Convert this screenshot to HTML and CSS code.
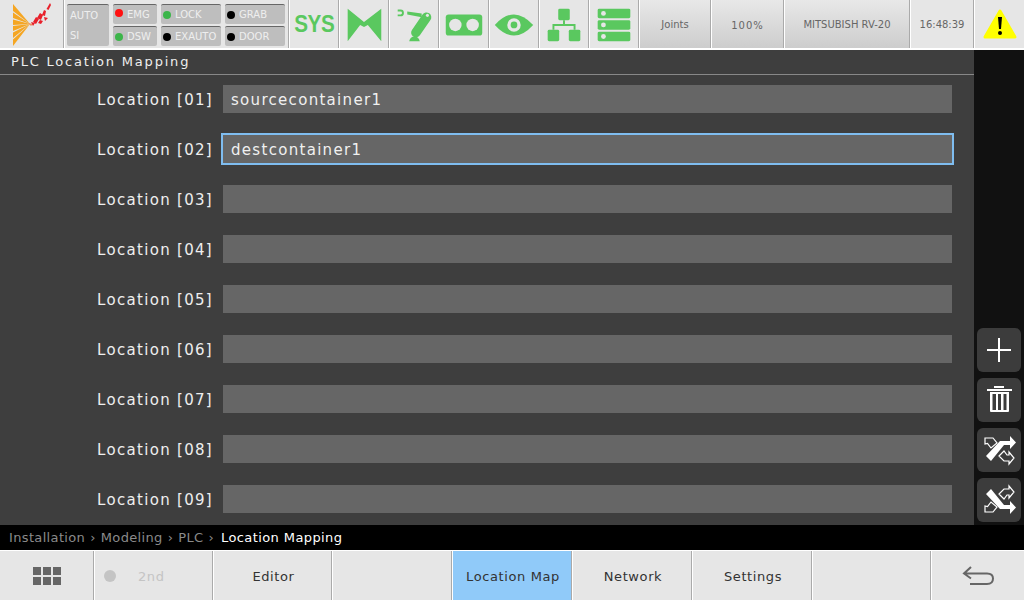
FILE: index.html
```html
<!DOCTYPE html>
<html lang="en">
<head>
<meta charset="utf-8">
<title>PLC Location Mapping</title>
<link rel="stylesheet" href="styles.css">
</head>
<body>
<div class="app">
  <header class="topbar">
    <div class="cell logo">
      <svg width="63" height="48" viewBox="0 0 63 48">
        <g fill="#f5a623">
          <polygon points="13,4 30,24 13,11"/>
          <polygon points="13,12.500 30,24 13,18"/>
          <polygon points="13,19.500 30,24 13,25"/>
          <polygon points="13,26 30,24 13,31"/>
          <polygon points="13,32.500 30,24 13,38"/>
          <polygon points="13,39.500 30,24 13,46"/>
        </g>
        <polygon points="28,23 33,24 31,26" fill="#f08a5d"/>
        <g fill="#e8202a">
          <polygon points="50,3 51,5 48.500,10 46.500,9"/>
          <polygon points="44,10 46,11 45,16 42,15"/>
          <polygon points="40,13 43,15 41,20 37,18"/>
          <polygon points="44,17 48,18 45,21"/>
          <polygon points="36,17 39,19 36,24 33,22"/>
          <polygon points="40,20 43,21 41,24 38,23"/>
          <polygon points="31,22 35,23 33,26"/>
        </g>
      </svg>
    </div>
    <div class="cell status">
      <div class="mode"><span>AUTO</span><span>SI</span></div>
      <div class="lamps lamps-a">
        <div class="lamp"><i class="dot red up"></i>EMG</div>
        <div class="lamp"><i class="dot green"></i>DSW</div>
      </div>
      <div class="lamps lamps-b">
        <div class="lamp"><i class="dot green"></i>LOCK</div>
        <div class="lamp"><i class="dot black"></i>EXAUTO</div>
      </div>
      <div class="lamps lamps-b">
        <div class="lamp"><i class="dot black"></i>GRAB</div>
        <div class="lamp"><i class="dot black"></i>DOOR</div>
      </div>
    </div>
    <div class="cell icon"><span class="sys">SYS</span></div>
    <div class="cell icon">
      <svg width="50" height="48" viewBox="0 0 50 48"><path fill="#5ac85f" d="M8 8 L25 22 L43 8 V42 L29 25 L25 27 L21 25 L8 42 Z"/></svg>
    </div>
    <div class="cell icon">
      <svg width="50" height="48" viewBox="0 0 50 48">
        <path fill="none" stroke="#5ac85f" stroke-width="2" d="M8 10 H11 A2.500 2.500 0 0 1 11 15 H8"/>
        <path fill="#5ac85f" d="M18 11 L33 13 L33 17 L18 14 Z"/>
        <path fill="none" stroke="#5ac85f" stroke-width="10" stroke-linecap="round" d="M38 17 L27 33"/>
        <circle cx="39" cy="15" r="1.600" fill="#e6e6e6"/>
        <path fill="#5ac85f" d="M20 42 Q21 37 25.500 37 Q30 37 31 42 Z"/>
      </svg>
    </div>
    <div class="cell icon">
      <svg width="50" height="48" viewBox="0 0 50 48">
        <rect x="6" y="14" width="38" height="22" rx="3" fill="#5ac85f"/>
        <circle cx="16" cy="25" r="6.500" fill="#e6e6e6"/>
        <circle cx="34" cy="25" r="6.500" fill="#e6e6e6"/>
      </svg>
    </div>
    <div class="cell icon">
      <svg width="50" height="48" viewBox="0 0 50 48">
        <path fill="#5ac85f" d="M5 25 Q15 14 25 14 Q35 14 45 25 Q35 36 25 36 Q15 36 5 25 Z"/>
        <circle cx="25" cy="25" r="7" fill="#e6e6e6"/>
        <circle cx="25" cy="25" r="3.500" fill="#5ac85f"/>
      </svg>
    </div>
    <div class="cell icon">
      <svg width="50" height="48" viewBox="0 0 50 48">
        <rect x="19" y="8" width="12" height="12" rx="1.500" fill="#5ac85f"/>
        <rect x="8" y="30" width="12" height="12" rx="1.500" fill="#5ac85f"/>
        <rect x="30" y="30" width="12" height="12" rx="1.500" fill="#5ac85f"/>
        <path fill="none" stroke="#5ac85f" stroke-width="2" d="M25 20 V25 M14 30 V25 H36 V30"/>
      </svg>
    </div>
    <div class="cell icon">
      <svg width="50" height="48" viewBox="0 0 50 48">
        <g fill="#5ac85f"><rect x="8" y="8" width="34" height="10" rx="1.500"/><rect x="8" y="20" width="34" height="10" rx="1.500"/><rect x="8" y="32" width="34" height="10" rx="1.500"/></g>
        <g fill="#e6e6e6"><circle cx="14" cy="13" r="2.500"/><circle cx="14" cy="25" r="2.500"/><circle cx="14" cy="37" r="2.500"/></g>
      </svg>
    </div>
    <div class="cell btn w71"><span>Joints</span></div>
    <div class="cell btn w72"><span class="wide">100%</span></div>
    <div class="cell btn w125"><span>MITSUBISH RV-20</span></div>
    <div class="cell clock">16:48:39</div>
    <div class="warn">
      <svg width="36" height="32" viewBox="0 0 36 32">
        <path fill="#ffff00" stroke="#ffff00" stroke-width="3" stroke-linejoin="round" d="M18 3 L33 29 H3 Z"/>
        <path fill="#000" d="M16 9 H20 L19 21 H17 Z"/>
        <circle cx="18" cy="25" r="2" fill="#000"/>
      </svg>
    </div>
  </header>

  <div class="middle">
    <main class="panel">
      <h1 class="title">PLC Location Mapping</h1>
      <div class="rows">
        <div class="row"><label>Location [01]</label><div class="field">sourcecontainer1</div></div>
        <div class="row"><label>Location [02]</label><div class="field focus">destcontainer1</div></div>
        <div class="row"><label>Location [03]</label><div class="field"></div></div>
        <div class="row"><label>Location [04]</label><div class="field"></div></div>
        <div class="row"><label>Location [05]</label><div class="field"></div></div>
        <div class="row"><label>Location [06]</label><div class="field"></div></div>
        <div class="row"><label>Location [07]</label><div class="field"></div></div>
        <div class="row"><label>Location [08]</label><div class="field"></div></div>
        <div class="row"><label>Location [09]</label><div class="field"></div></div>
      </div>
    </main>
    <aside class="side">
      <button class="tool">
        <svg width="44" height="44" viewBox="0 0 44 44"><path stroke="#fff" stroke-width="2" d="M10 22 H34 M22 10 V34"/></svg>
      </button>
      <button class="tool">
        <svg width="44" height="44" viewBox="0 0 44 44">
          <path fill="#fff" d="M17 8 H27 V10 H17 Z M10 11 H35 V13 H10 Z"/>
          <path fill="#fff" fill-rule="evenodd" d="M13 14 H32 V33 Q32 34 31 34 H14 Q13 34 13 33 Z M15.500 16 V32 H19 V16 Z M21 16 V32 H24 V16 Z M26.500 16 V32 H29.500 V16 Z"/>
        </svg>
      </button>
      <button class="tool">
        <svg width="44" height="44" viewBox="0 0 44 44">
          <path fill="#fff" d="M9 28 L23 13 H33 V8 L39 14.500 L33 21 V17 H27 L14 33 Z"/>
          <path fill="none" stroke="#fff" stroke-width="1.200" d="M8 10 H16 L20 15 L14 20 L10.500 15.500 L8 16 Z"/>
          <path fill="none" stroke="#fff" stroke-width="1.200" d="M22 28 L27 23 L30 27 H32 V24 L37 30 L32 36 V33 H27 Z"/>
        </svg>
      </button>
      <button class="tool">
        <svg width="44" height="44" viewBox="0 0 44 44">
          <g transform="matrix(1 0 0 -1 0 44)">
            <path fill="#fff" d="M9 28 L23 13 H33 V8 L39 14.500 L33 21 V17 H27 L14 33 Z"/>
            <path fill="none" stroke="#fff" stroke-width="1.200" d="M8 10 H16 L20 15 L14 20 L10.500 15.500 L8 16 Z"/>
            <path fill="none" stroke="#fff" stroke-width="1.200" d="M22 28 L27 23 L30 27 H32 V24 L37 30 L32 36 V33 H27 Z"/>
          </g>
        </svg>
      </button>
    </aside>
  </div>

  <nav class="crumbs">
    <span>Installation</span><b>›</b><span>Modeling</span><b>›</b><span>PLC</span><b>›</b><span class="here">Location Mapping</span>
  </nav>

  <footer class="bottombar">
    <div class="tab t93">
      <svg width="28" height="18" viewBox="0 0 28 18"><g fill="#666"><rect x="0" y="0" width="8" height="8"/><rect x="10" y="0" width="8" height="8"/><rect x="20" y="0" width="8" height="8"/><rect x="0" y="10" width="8" height="8"/><rect x="10" y="10" width="8" height="8"/><rect x="20" y="10" width="8" height="8"/></g></svg>
    </div>
    <div class="tab t119 second"><i class="led"></i><span>2nd</span></div>
    <div class="tab t119 text">Editor</div>
    <div class="tab t120"></div>
    <div class="tab t121 active text">Location Map</div>
    <div class="tab t120 text">Network</div>
    <div class="tab t120 text">Settings</div>
    <div class="tab t119"></div>
    <div class="tab grow">
      <svg width="34" height="24" viewBox="0 0 34 24"><path fill="none" stroke="#666" stroke-width="2" stroke-linejoin="miter" d="M10 3 L3 9.500 L10 14.500 M3 9.500 H26 Q32 9.500 32 14.500 Q32 20 26 20 H9"/></svg>
    </div>
  </footer>
</div>
</body>
</html>
```
FILE: styles.css
```css
* { box-sizing: border-box; }
html, body { margin: 0; height: 100%; overflow: hidden; }
body { font-family: "DejaVu Sans", sans-serif; background: #000; }
.app { width: 1024px; height: 600px; display: flex; flex-direction: column; }

.topbar { height: 50px; display: flex; background: #e6e6e6; border-bottom: 2px solid #fff; flex: none; }
.cell { flex: none; display: flex; align-items: center; justify-content: center; border-right: 1px solid #aaa; box-shadow: 1px 0 0 #fff; margin-right: 1px; }
.logo { width: 64px; }
.status { width: 224px; gap: 4px; padding: 4px 3px 2px 2px; align-items: stretch; justify-content: flex-start; }
.mode { width: 42px; height: 42px; background: #bebebe; border-top: 1px solid #666; border-radius: 2px; color: #eee; font-size: 10px; display: flex; flex-direction: column; justify-content: space-around; padding-left: 3px; }
.lamps { display: flex; flex-direction: column; gap: 2px; height: 42px; }
.lamps-a { width: 44px; }
.lamps-b { width: 60px; }
.lamp { height: 20px; background: #bebebe; border-top: 1px solid #666; border-radius: 2px; color: #eee; font-size: 10px; display: flex; align-items: center; padding-left: 2px; gap: 4px; white-space: nowrap; }
.dot { width: 8px; height: 8px; border-radius: 50%; flex: none; }
.up { margin-top: -3px; }
.red { background: #ff1010; }
.green { background: #3cb54a; }
.black { background: #000; }

.icon { width: 49px; }
.sys { font-family: "Liberation Sans", sans-serif; color: #5ac85f; font-weight: 700; font-size: 24px; transform: scaleX(.86); letter-spacing: -.5px; }

.btn { background: linear-gradient(#e8e8e8, #cdcdcd); color: #666; font-size: 10px; white-space: nowrap; }
.btn span { padding-top: 1px; }
.btn .wide { letter-spacing: 1px; padding-top: 3px; }
.w71 { width: 71px; }
.w72 { width: 72px; }
.w125 { width: 125px; }
.clock { width: 63px; color: #666; font-size: 10px; }
.warn { width: 50px; flex: none; display: flex; align-items: center; justify-content: center; margin-left: auto; }

.middle { height: 475px; display: flex; flex: none; }
.panel { width: 974px; background: #3e3e3e; overflow: hidden; }
.title { margin: 0; height: 25px; padding: 0 11px; border-bottom: 1px solid #888; color: #eee; font-size: 13px; font-weight: 400; letter-spacing: 1.8px; line-height: 24px; }
.rows { display: flex; flex-direction: column; gap: 22px; padding-top: 10px; }
.row { display: flex; height: 28px; align-items: center; }
.row label { width: 213px; text-align: right; color: #eee; font-size: 15px; letter-spacing: 1.3px; white-space: nowrap; padding-top: 2px; }
.field { margin-left: 10px; width: 729px; height: 28px; background: #666; color: #f0f0f0; font-size: 15px; letter-spacing: 1.3px; line-height: 30px; padding-left: 8px; }
.field.focus { outline: 2px solid #7fbdf0; }

.side { width: 50px; background: #111; display: flex; flex-direction: column; justify-content: flex-end; gap: 6px; padding: 0 3px 3px; }
.tool { width: 44px; height: 44px; border: 0; padding: 0; background: #3c3c3c; border-radius: 6px; display: block; }
.tool svg { display: block; }

.crumbs { height: 25px; flex: none; background: #000; color: #8a8a8a; font-size: 13px; letter-spacing: .35px; display: flex; align-items: center; padding-left: 9px; padding-bottom: 1px; }
.crumbs b { font-weight: 400; margin: 0 5px; }
.here { color: #fff; margin-left: 2px; letter-spacing: .4px; }

.bottombar { height: 50px; flex: none; display: flex; background: #e6e6e6; border-top: 1px solid #fff; color: #333; font-size: 13px; letter-spacing: .6px; }
.tab { display: flex; align-items: center; justify-content: center; border-right: 1px solid #aaa; box-shadow: 1px 0 0 #fff; margin-right: 1px; flex: none; padding-top: 1px; }
.text { padding-left: 2px; }
.t93 { width: 94px; padding-top: 0; }
.t119 { width: 118px; }
.t120 { width: 119px; }
.t121 { width: 119px; }
.grow { flex: 1; border-right: 0; box-shadow: none; margin: 0; }
.active { background: #90caf9; }
.second { justify-content: flex-start; color: #c4c4c4; padding-left: 9px; gap: 22px; }
.led { width: 12px; height: 12px; border-radius: 50%; background: #c4c4c4; }
```
